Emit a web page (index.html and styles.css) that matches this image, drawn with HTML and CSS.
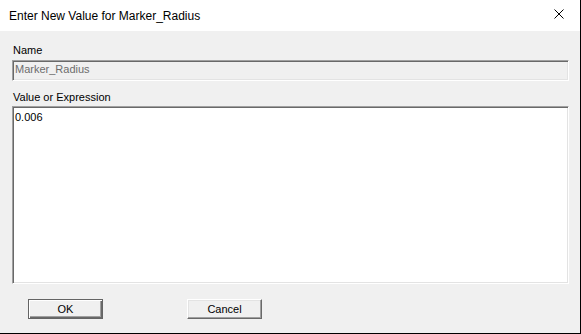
FILE: index.html
```html
<!DOCTYPE html>
<html lang="en">
<head>
    <meta charset="UTF-8">
    <title>Enter New Value for Marker_Radius</title>
    <link rel="stylesheet" href="styles.css">
</head>
<body>

    <div class="window">
        <div class="titlebar">
            <span class="title">Enter New Value for Marker_Radius</span>
            <svg class="close" width="10" height="10" viewBox="0 0 10 10">
                <path d="M0.5 0.5 L9.5 9.5 M9.5 0.5 L0.5 9.5" stroke="#000" stroke-width="1" fill="none"/>
            </svg>
        </div>

        <div class="content">
            <div class="label name-label">Name</div>
            <div class="field disabled">Marker_Radius</div>

            <div class="label value-label">Value or Expression</div>
            <div class="field textarea">0.006</div>

            <div class="buttons">
                <div class="button default"><span>OK</span></div>
                <div class="button"><span>Cancel</span></div>
            </div>
        </div>
    </div>

</body>
</html>
```

FILE: styles.css
```css
body {
    margin: 0;
    background-color: #f0f0f0;
    font-family: "Liberation Sans", Arial, sans-serif;
    font-size: 11px;
    color: #000;
    overflow: hidden;
}

.window {
    width: 580px;
    height: 333px;
    border-right: 1px solid #000;
    border-bottom: 1px solid #000;
    display: flex;
    flex-direction: column;
    background-color: #f0f0f0;
}

.titlebar {
    height: 31px;
    background-color: #fff;
    display: flex;
    align-items: center;
    justify-content: space-between;
    padding: 0 16px 0 9px;
    flex-shrink: 0;
}

.title {
    font-size: 12px;
    line-height: 16px;
}

.close {
    display: block;
    margin-top: -4px;
}

.content {
    flex: 1;
    display: flex;
    flex-direction: column;
    padding: 13px 11px 0 12px;
}

.label {
    line-height: 13px;
    padding-left: 1px;
}

.name-label {
    margin-bottom: 3px;
}

.value-label {
    margin-top: 10px;
    margin-bottom: 2px;
}

.field {
    border-top: 1px solid #a0a0a0;
    border-left: 1px solid #a0a0a0;
    border-right: 1px solid #fff;
    border-bottom: 1px solid #fff;
    box-shadow: inset 1px 1px 0 #696969, inset -1px -1px 0 #e3e3e3;
    padding: 0 2px;
    line-height: 13px;
}

.disabled {
    height: 19px;
    line-height: 17px;
    background-color: #f0f0f0;
    color: #6d6d6d;
}

.textarea {
    height: 172px;
    padding-top: 4px;
    background-color: #fff;
}

.buttons {
    display: flex;
    gap: 84px;
    margin-top: 15px;
    padding-left: 16px;
}

.button {
    width: 75px;
    height: 20px;
    box-sizing: border-box;
    border-top: 1px solid #fff;
    border-left: 1px solid #fff;
    border-right: 1px solid #696969;
    border-bottom: 1px solid #696969;
    box-shadow: inset -1px -1px 0 #a0a0a0, inset 1px 1px 0 #e3e3e3;
    display: flex;
    align-items: center;
    justify-content: center;
    line-height: 13px;
}

.default {
    border: 1px solid #646464;
    box-shadow: inset 1px 1px 0 #fff, inset -1px -1px 0 #696969, inset -2px -2px 0 #a0a0a0;
}
```
